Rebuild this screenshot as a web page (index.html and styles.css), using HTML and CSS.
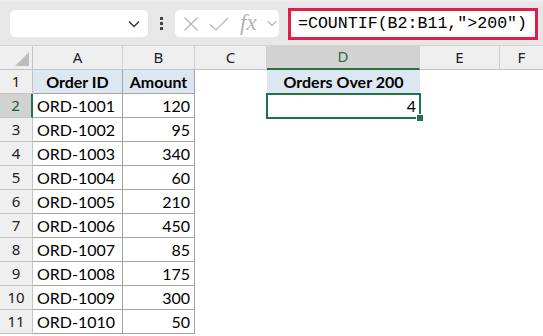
FILE: index.html
```html
<!DOCTYPE html>
<html lang="en">
<head>
  <meta charset="UTF-8" />
  <title>COUNTIF</title>
  <link rel="stylesheet" href="styles.css">
</head>
<body>
  <div class="toolbar">
    <div class="namebox">
      <svg class="chev" width="12" height="8" viewBox="0 0 12 8"><path d="M1 1.5 L6 6.5 L11 1.5" fill="none" stroke="#333" stroke-width="1.3"/></svg>
    </div>
    <div class="dots"><span></span><span></span><span></span></div>
    <div class="fxbox">
      <svg width="16" height="16" viewBox="0 0 16 16"><path d="M1.5 1.5 L14.5 14.5 M14.5 1.5 L1.5 14.5" stroke="#b4b4b4" stroke-width="1.2"/></svg>
      <svg width="20" height="16" viewBox="0 0 20 16"><path d="M1 8.5 L7 14 L19 2" fill="none" stroke="#b4b4b4" stroke-width="1.2"/></svg>
      <span class="fx">fx</span>
      <svg width="10" height="7" viewBox="0 0 10 7"><path d="M1 1.5 L5 5.5 L9 1.5" fill="none" stroke="#b4b4b4" stroke-width="1.2"/></svg>
    </div>
    <div class="formula">=COUNTIF(B2:B11,"&gt;200")</div>
  </div>

  <div class="sheet">
    <div class="corner"><span class="tri"></span></div>
    <div class="colhead">A</div>
    <div class="colhead">B</div>
    <div class="colhead">C</div>
    <div class="colhead active">D</div>
    <div class="colhead">E</div>
    <div class="colhead last">F</div>
  </div>
  <div class="sheet" id="rows"></div>

  <script>
    const data = [
      ["ORD-1001", 120], ["ORD-1002", 95], ["ORD-1003", 340], ["ORD-1004", 60],
      ["ORD-1005", 210], ["ORD-1006", 450], ["ORD-1007", 85], ["ORD-1008", 175],
      ["ORD-1009", 300], ["ORD-1010", 50]
    ];

    function cell(cls, text) {
      const d = document.createElement("div");
      d.className = cls;
      if (text !== undefined) d.textContent = text;
      return d;
    }

    const rows = document.getElementById("rows");
    const all = [["Order ID", "Amount"]].concat(data);

    all.forEach((r, i) => {
      const n = i + 1;
      rows.appendChild(cell(n === 2 ? "rowhead sel" : "rowhead", n));
      if (n === 1) {
        rows.appendChild(cell("c tb hd", r[0]));
        rows.appendChild(cell("c tb hd", r[1]));
        rows.appendChild(cell("c"));
        rows.appendChild(cell("c hd", "Orders Over 200"));
      } else {
        rows.appendChild(cell("c tb", r[0]));
        rows.appendChild(cell("c tb num", r[1]));
        rows.appendChild(cell("c"));
        if (n === 2) {
          const d = cell("c num active", 4);
          d.appendChild(cell("handle"));
          rows.appendChild(d);
        } else {
          rows.appendChild(cell("c"));
        }
      }
      rows.appendChild(cell("c"));
      rows.appendChild(cell("c"));
    });
  </script>
</body>
</html>
```

FILE: styles.css
```css
:root {
  --green: #217346;
  --grid: #a3a3a3;
  --head: #efefef;
}

body {
  margin: 0;
  background: #ffffff;
  font-family: Lato, "Liberation Sans", sans-serif;
  color: #000000;
  overflow: hidden;
}

/* BARRA DE FORMULA */
.toolbar {
  height: 46px;
  background: #e7e7e7;
  border-top: 2px solid #ededed;
  border-bottom: 1px solid #d4d4d4;
  display: flex;
  align-items: center;
  box-sizing: border-box;
  padding-left: 10px;
}

.namebox {
  width: 138px;
  height: 27px;
  background: #ffffff;
  border-radius: 5px;
  display: flex;
  align-items: center;
  justify-content: flex-end;
  padding-right: 8px;
  box-sizing: border-box;
}

.dots {
  width: 27px;
  display: flex;
  flex-direction: column;
  align-items: center;
  gap: 2px;
}

.dots span {
  width: 3px;
  height: 3px;
  background: #444444;
}

.fxbox {
  width: 104px;
  height: 27px;
  background: #ffffff;
  border-radius: 5px;
  display: flex;
  align-items: center;
  padding-left: 8px;
  gap: 10px;
  box-sizing: border-box;
}

.fx {
  font-family: "Liberation Serif", serif;
  font-style: italic;
  font-size: 23px;
  color: #b4b4b4;
  margin-left: 1px;
  line-height: 1;
  margin-top: -3px;
}

.formula {
  margin-left: 9px;
  width: 250px;
  height: 32px;
  border: 3px solid #e11d4b;
  background: #ffffff;
  box-sizing: border-box;
  font-family: "Liberation Mono", monospace;
  font-size: 16.6px;
  line-height: 26px;
  padding-left: 7px;
  white-space: nowrap;
}

/* GRADE */
.sheet {
  display: grid;
  grid-template-columns: 33px 90px 72px 72px 153px 80px 43px;
  grid-auto-rows: 24px;
}

.sheet:first-of-type {
  grid-auto-rows: 23px;
}

.corner,
.colhead {
  background: var(--head);
  border-bottom: 1px solid #c4c4c4;
  box-sizing: border-box;
}

.corner {
  border-right: 1px solid #c4c4c4;
  position: relative;
}

.tri {
  position: absolute;
  right: 3px;
  bottom: 3px;
  width: 0;
  height: 0;
  border-left: 14px solid transparent;
  border-bottom: 14px solid #bdbdbd;
}

.colhead {
  font-family: "Noto Sans", sans-serif;
  font-size: 15px;
  text-align: center;
  line-height: 22px;
  border-right: 1px solid #d0d0d0;
  color: #222222;
}

.colhead.active {
  background: #d2d2d2;
  color: var(--green);
  border-bottom: 2px solid var(--green);
  line-height: 21px;
}

.colhead.last {
  border-right: none;
}

.rowhead {
  background: var(--head);
  font-family: "Noto Sans", sans-serif;
  font-size: 15px;
  text-align: center;
  line-height: 23px;
  border-right: 1px solid #c4c4c4;
  border-bottom: 1px solid #c4c4c4;
  box-sizing: border-box;
  color: #222222;
}

.rowhead.sel {
  background: #d2d2d2;
  color: #155a3a;
  border-right: 2px solid var(--green);
}

.c {
  font-size: 16px;
  line-height: 23px;
  padding: 0 4px;
  box-sizing: border-box;
  white-space: nowrap;
}

.c.tb {
  border-right: 1px solid var(--grid);
  border-bottom: 1px solid var(--grid);
}

.c.hd {
  background: #dde7f2;
  font-weight: 700;
  text-align: center;
}

.c.num {
  text-align: right;
}

.c.active {
  position: relative;
}

.c.active::after {
  content: "";
  position: absolute;
  left: -1px;
  top: -1px;
  right: -1px;
  bottom: -1px;
  border: 2px solid var(--green);
}

.handle {
  position: absolute;
  right: -4px;
  bottom: -4px;
  width: 6px;
  height: 6px;
  background: var(--green);
  border: 1px solid #ffffff;
  z-index: 2;
}
```
